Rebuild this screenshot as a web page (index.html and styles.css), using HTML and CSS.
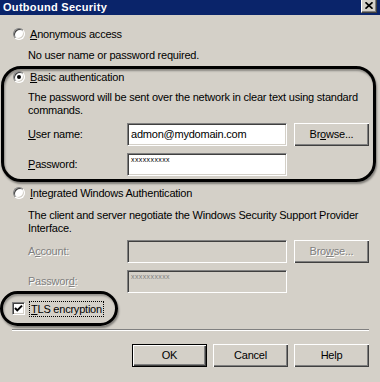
FILE: index.html
```html
<!DOCTYPE html>
<html lang="en">
<head>
<meta charset="utf-8">
<title>Outbound Security</title>
<link rel="stylesheet" href="styles.css">
</head>
<body>
<div class="titlebar">
  <span class="title">Outbound Security</span>
  <span class="close"><svg width="8" height="7" viewBox="0 0 8 7"><path d="M0.5 0.3 L7.5 6.7 M7.5 0.3 L0.5 6.7" stroke="#000" stroke-width="1.7" fill="none"/></svg></span>
</div>
<div class="panel">
  <div class="option"><span class="radio"></span><span class="text"><u>A</u>nonymous access</span></div>
  <p class="desc">No user name or password required.</p>

  <div class="group">
    <div class="option"><span class="radio on"></span><span class="text"><u>B</u>asic authentication</span></div>
    <p class="desc desc-tight">The password will be sent over the network in clear text using standard<br>commands.</p>
    <div class="field first">
      <span class="label"><u>U</u>ser name:</span>
      <span class="textbox">admon@mydomain.com</span>
      <span class="btn browse">Br<u>o</u>wse...</span>
    </div>
    <div class="field">
      <span class="label"><u>P</u>assword:</span>
      <span class="textbox secret"><span class="mask">xxxxxxxxxx</span></span>
    </div>
  </div>

  <div class="option option-gap"><span class="radio"></span><span class="text"><u>I</u>ntegrated Windows Authentication</span></div>
  <p class="desc desc-loose">The client and server negotiate the Windows Security Support Provider<br>Interface.</p>
  <div class="field disabled first-tight">
    <span class="label">A<u>c</u>count:</span>
    <span class="textbox"></span>
    <span class="btn browse">Bro<u>w</u>se...</span>
  </div>
  <div class="field disabled">
    <span class="label">Passwor<u>d</u>:</span>
    <span class="textbox secret"><span class="mask">xxxxxxxxxx</span></span>
  </div>

  <div class="tls">
    <span class="check"><svg width="9" height="9" viewBox="0 0 9 9"><polyline points="1,4 3.3,6.4 8,1.6" stroke="#000" stroke-width="2" fill="none"/></svg></span>
    <span class="focus"><u>T</u>LS encryption</span>
  </div>

  <div class="sep"></div>

  <div class="actions">
    <span class="btn default">OK</span>
    <span class="btn">Cancel</span>
    <span class="btn">Help</span>
  </div>
</div>
</body>
</html>
```
FILE: styles.css
```css
* { box-sizing: border-box; }
html, body { margin: 0; padding: 0; }
body {
  width: 380px;
  height: 382px;
  overflow: hidden;
  background: #d4d0c8;
  color: #000;
  font-family: "Liberation Sans", Arial, sans-serif;
  font-size: 11px;
  line-height: 13px;
  letter-spacing: -0.22px;
}
u { text-decoration: underline; text-underline-offset: 1px; }

.titlebar {
  height: 15px;
  background: #0a246a;
  display: flex;
  justify-content: space-between;
  align-items: flex-start;
  padding: 0 3px 0 3px;
}
.title {
  color: #fff;
  font-weight: bold;
  line-height: 14px;
  letter-spacing: 0.3px;
}
.close {
  width: 16px;
  height: 13px;
  background: #d4d0c8;
  border-left: 1px solid #fff;
  border-right: 1px solid #404040;
  border-bottom: 1px solid #404040;
  box-shadow: inset -1px -1px 0 #808080;
  display: flex;
  justify-content: center;
  align-items: center;
  padding-bottom: 2px;
}
.close svg { display: block; }

.panel { padding: 12px 11px 0 13px; }

.option {
  height: 14px;
  display: flex;
  align-items: center;
  gap: 5px;
}
.option-gap { margin-top: 4px; }
.radio {
  flex: none;
  width: 12px;
  height: 12px;
  border-radius: 50%;
  background: #fff;
  border: 1px solid;
  border-color: #808080 #fff #fff #808080;
  box-shadow: inset 1px 1px 0 #404040, inset -1px -1px 0 #d4d0c8;
  display: flex;
  align-items: center;
  justify-content: center;
}
.radio.on::after {
  content: "";
  width: 4px;
  height: 4px;
  border-radius: 50%;
  background: #000;
}

.desc { margin: 8px 0 0 15px; }
.desc-tight { margin-top: 7px; }
.desc-loose { margin-top: 9px; }

.group {
  margin: 4px -7px 0 -12px;
  border: 3px solid #000;
  border-radius: 20px;
  padding: 1px 4px 3px 9px;
  box-shadow: 1px 2px 2px rgba(0,0,0,0.4), inset 1px 2px 2px rgba(0,0,0,0.35);
}

.field {
  display: flex;
  align-items: center;
  height: 23px;
  margin: 7px 0 0 15px;
}
.field.first { margin-top: 6px; }
.field.first-tight { margin-top: 5px; }
.label { width: 99px; flex: none; }
.textbox {
  flex: none;
  width: 160px;
  height: 23px;
  background: #fff;
  border: 1px solid;
  border-color: #808080 #fff #fff #808080;
  box-shadow: inset 1px 1px 0 #404040, inset -1px -1px 0 #d4d0c8;
  padding: 0 3px;
  display: flex;
  align-items: center;
  white-space: nowrap;
}
.textbox.secret { align-items: flex-start; padding-top: 2px; }
.mask {
  font-size: 7px;
  line-height: 7px;
  letter-spacing: 0.4px;
}
.disabled .label,
.disabled .btn {
  color: #808080;
  text-shadow: 1px 1px 0 #fff;
}
.disabled .textbox { background: #d4d0c8; }
.disabled .mask { color: #808080; }

.btn {
  flex: none;
  width: 75px;
  height: 23px;
  background: #d4d0c8;
  box-shadow: inset 1px 1px 0 #fff, inset -1px -1px 0 #404040, inset -2px -2px 0 #808080;
  display: flex;
  align-items: center;
  justify-content: center;
}
.browse { margin-left: 7px; }
.btn.default { border: 1px solid #000; }

.tls {
  display: flex;
  align-items: center;
  gap: 4px;
  width: 118px;
  height: 35px;
  margin: -2px 0 0 -13px;
  padding-left: 9px;
  border: 3px solid #000;
  border-radius: 18px;
  box-shadow: 1px 2px 2px rgba(0,0,0,0.4), inset 1px 2px 2px rgba(0,0,0,0.3);
}
.check {
  flex: none;
  width: 13px;
  height: 13px;
  background: #fff;
  border: 1px solid;
  border-color: #808080 #fff #fff #808080;
  box-shadow: inset 1px 1px 0 #404040, inset -1px -1px 0 #d4d0c8;
  display: flex;
  align-items: center;
  justify-content: center;
}
.check svg { display: block; }
.focus {
  border: 1px dotted #000;
  height: 16px;
  padding: 0 1px;
  line-height: 14px;
  white-space: nowrap;
}

.sep {
  height: 2px;
  margin: 3px 0 0 -1px;
  border-top: 1px solid #808080;
  border-bottom: 1px solid #fff;
}

.actions {
  display: flex;
  justify-content: flex-end;
  gap: 6px;
  margin-top: 13px;
}
```
